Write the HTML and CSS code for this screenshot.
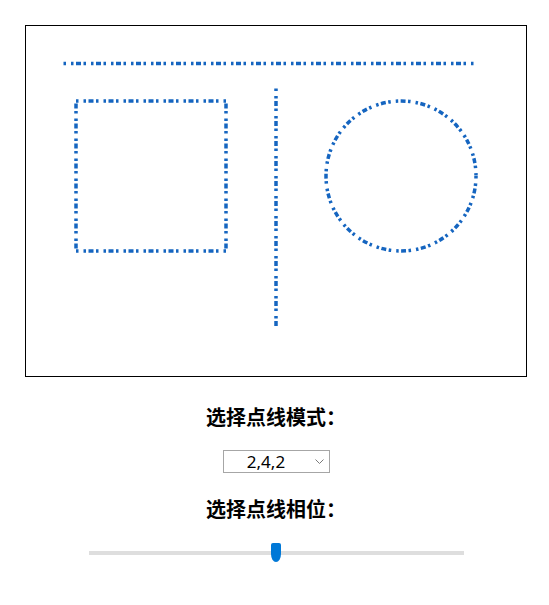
FILE: index.html
```html
<!DOCTYPE html>
<html lang="zh">
<head>
<meta charset="utf-8">
<title>点线模式</title>
<link rel="stylesheet" href="styles.css">
</head>
<body>
<main class="page">
  <svg class="canvas" viewBox="0 0 400 280" xmlns="http://www.w3.org/2000/svg">
    <g class="shapes" fill="none" stroke="#1565c0" stroke-width="2.8" stroke-dasharray="2,4,2" stroke-dashoffset="0">
      <line x1="30" y1="30" x2="360" y2="30"/>
      <rect x="40" y="60" width="120" height="120"/>
      <line x1="200" y1="50" x2="200" y2="240"/>
      <circle cx="300" cy="120" r="60"/>
    </g>
  </svg>
  <h3 class="label label-mode">选择点线模式：</h3>
  <div class="select-wrap">
    <select class="select">
      <option>2,4,2</option>
      <option>5,5</option>
      <option>10,5</option>
    </select>
    <svg class="chevron" width="9" height="5" viewBox="0 0 9 5"><path d="M0.5 0.5 L4.5 4.5 L8.5 0.5" fill="none" stroke="#7a7a7a" stroke-width="1"/></svg>
  </div>
  <h3 class="label label-phase">选择点线相位：</h3>
  <input class="range" type="range" min="0" max="100" value="50">
</main>
</body>
</html>
```

FILE: styles.css
```css
html, body {
  margin: 0;
  padding: 0;
  background: #fff;
}
body {
  font-family: "Noto Sans", "Noto Sans CJK SC", sans-serif;
}
.page {
  display: flex;
  flex-direction: column;
  align-items: center;
  padding: 25px 0 0 3px;
}
.canvas {
  display: block;
  width: 500px;
  height: 350px;
  border: 1px solid #000;
}
.label {
  margin: 26px 0 0;
  font-family: "Noto Sans CJK SC", sans-serif;
  font-weight: bold;
  font-size: 20px;
  line-height: 28px;
  color: #000;
}
.label-phase {
  margin-top: 22px;
}
.select-wrap {
  position: relative;
  margin-top: 19px;
}
.select {
  display: block;
  -webkit-appearance: none;
  appearance: none;
  width: 107px;
  height: 23px;
  box-sizing: border-box;
  margin: 0;
  padding: 0 20px 0 0;
  border: 1px solid #a6a6a6;
  border-radius: 0;
  background: #fff;
  font-family: "Noto Sans", sans-serif;
  font-size: 17px;
  line-height: 21px;
  color: #000;
  text-align: center;
  text-align-last: center;
  outline: none;
}
.chevron {
  position: absolute;
  right: 6px;
  top: 9px;
  pointer-events: none;
}
.range {
  display: block;
  -webkit-appearance: none;
  appearance: none;
  width: 375px;
  height: 20px;
  margin: 20px 0 0;
  padding: 0;
  background: transparent;
}
.range::-webkit-slider-runnable-track {
  height: 4px;
  background: #dedede;
  border: none;
}
.range::-webkit-slider-thumb {
  -webkit-appearance: none;
  appearance: none;
  width: 10px;
  height: 19px;
  margin-top: -8px;
  background: #0078d7;
  border: none;
  border-radius: 2px 2px 5px 5px / 2px 2px 8px 8px;
}
```
